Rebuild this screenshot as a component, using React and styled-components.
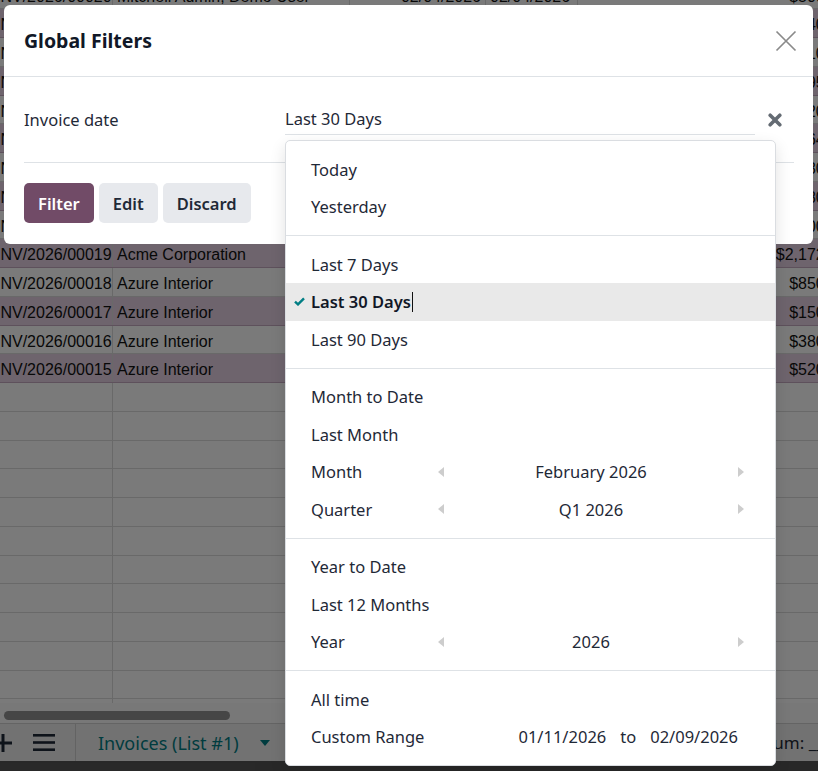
import React from 'react';
import styled, { createGlobalStyle } from 'styled-components';

const GlobalStyle = createGlobalStyle`
  html, body { margin: 0; padding: 0; }
  body { font-family: "Noto Sans", "Open Sans", sans-serif; overflow: hidden; }
  * { box-sizing: border-box; }
`;

const rows = [
  { num: 'INV/2026/00020', partner: 'Mitchell Admin, Demo User', date: '02/04/2026', due: '02/04/2026', amount: '$500.00' },
  { num: 'INV/2026/00027', partner: 'Deco Addict', date: '02/03/2026', due: '02/03/2026', amount: '$1,240.00', tint: true },
  { num: 'INV/2026/00026', partner: 'Gemini Furniture', date: '02/02/2026', due: '02/02/2026', amount: '$310.00' },
  { num: 'INV/2026/00025', partner: 'Lumber Inc', date: '02/01/2026', due: '02/01/2026', amount: '$95.00', tint: true },
  { num: 'INV/2026/00024', partner: 'Ready Mat', date: '01/30/2026', due: '01/30/2026', amount: '$720.00' },
  { num: 'INV/2026/00023', partner: 'The Jackson Group', date: '01/28/2026', due: '01/28/2026', amount: '$64.00', tint: true },
  { num: 'INV/2026/00022', partner: 'Wood Corner', date: '01/25/2026', due: '01/25/2026', amount: '$1,030.00' },
  { num: 'INV/2026/00021', partner: 'Deco Addict', date: '01/22/2026', due: '01/22/2026', amount: '$480.00', tint: true },
  { num: 'INV/2026/00020', partner: 'Mitchell Admin, Demo User', date: '01/20/2026', due: '01/20/2026', amount: '$500.00' },
  { num: 'INV/2026/00019', partner: 'Acme Corporation', date: '01/19/2026', due: '01/19/2026', amount: '$2,172.50', tint: true },
  { num: 'INV/2026/00018', partner: 'Azure Interior', date: '01/18/2026', due: '01/18/2026', amount: '$850.00' },
  { num: 'INV/2026/00017', partner: 'Azure Interior', date: '01/17/2026', due: '01/17/2026', amount: '$150.00', tint: true },
  { num: 'INV/2026/00016', partner: 'Azure Interior', date: '01/16/2026', due: '01/16/2026', amount: '$380.00' },
  { num: 'INV/2026/00015', partner: 'Azure Interior', date: '01/15/2026', due: '01/15/2026', amount: '$520.00', tint: true },
];

const emptyRows = Array.from({ length: 12 }, (_, i) => i);

const Page = styled.div`
  position: relative;
  width: 818px;
  height: 771px;
  overflow: hidden;
  background: #fff;
`;

const Sheet = styled.div`
  display: flex;
  flex-direction: column;
  height: 100%;
`;

const Grid = styled.div`
  flex: 1;
  margin: -19.5px 0 0 -8px;
  overflow: hidden;
  font-family: "Liberation Sans", Arial, sans-serif;
  font-size: 16px;
  color: #111;
`;

const Row = styled.div`
  display: grid;
  grid-template-columns: 121px 237px 136px 92px 274px;
  height: 28.75px;
  background: ${p => (p.$tint ? '#e6d1e4' : '#fff')};
  border-bottom: 1px solid ${p => (p.$tint ? '#c4aac1' : '#dcdcdc')};
`;

const Cell = styled.div`
  padding: 2px 4px 0;
  line-height: 27px;
  white-space: nowrap;
  overflow: hidden;
  border-right: 1px solid #dcdcdc;
  text-align: ${p => (p.$right ? 'right' : 'left')};
`;

const ScrollTrack = styled.div`
  height: 20px;
  padding: 8px 0 0 4px;
  background: #fafafa;
`;

const Thumb = styled.div`
  width: 226px;
  height: 9px;
  border-radius: 5px;
  background: #929292;
`;

const BottomBar = styled.div`
  display: flex;
  align-items: center;
  height: 38px;
  background: #efefef;
  border-top: 1px solid #d2d2d2;
  color: #1f2937;
`;

const BarIcon = styled.svg`
  flex: none;
  margin-left: ${p => p.$ml || 0}px;
`;

const BarDivider = styled.div`
  align-self: stretch;
  width: 1px;
  margin-left: 20px;
  background: #cfcfcf;
`;

const SheetTab = styled.div`
  display: flex;
  align-items: center;
  gap: 21px;
  padding-left: 22px;
  font-size: 18px;
  color: #017e84;
  white-space: nowrap;
`;

const Spacer = styled.div`
  flex: 1;
`;

const SumCell = styled.div`
  flex: none;
  width: 130px;
  margin-right: -76px;
  font-size: 17px;
  white-space: nowrap;
  color: #1f2937;
`;

const StatusStrip = styled.div`
  height: 10px;
  background: #555;
`;

const Backdrop = styled.div`
  position: absolute;
  inset: 0;
  background: rgba(0, 0, 0, 0.52);
`;

const Dialog = styled.section`
  position: absolute;
  top: 5px;
  left: 4px;
  width: 809px;
  background: #fff;
  border-radius: 6px;
  color: #1f2937;
`;

const Header = styled.header`
  display: flex;
  align-items: center;
  justify-content: space-between;
  height: 72px;
  padding: 0 16px 0 20px;
  border-bottom: 1px solid #dee2e6;
`;

const Title = styled.h4`
  margin: 0;
  font-size: 19.5px;
  font-weight: 700;
  color: #111827;
`;

const CloseButton = styled.button`
  display: flex;
  padding: 0;
  border: 0;
  background: none;
`;

const Body = styled.div`
  margin: 0 19px 0 20px;
  padding: 28px 0 27px;
  border-bottom: 1px solid #dee2e6;
`;

const FieldRow = styled.div`
  display: grid;
  grid-template-columns: 261px 470px auto;
  align-items: center;
  font-size: 16.5px;
`;

const Label = styled.div`
  padding-bottom: 2px;
  color: #1f2937;
`;

const Field = styled.div`
  position: relative;
  display: flex;
  align-items: center;
  height: 30px;
  padding-bottom: 2px;
  border-bottom: 1px solid #dee2e6;
`;

const ClearIcon = styled.svg`
  margin-left: 13px;
`;

const Footer = styled.footer`
  display: flex;
  gap: 5px;
  padding: 20px 20px 21px;
`;

const Button = styled.button`
  height: 40px;
  padding: 0 14px;
  border: 0;
  border-radius: 5px;
  font-family: inherit;
  font-size: 16.5px;
  font-weight: 600;
  background: ${p => (p.$primary ? '#714b67' : '#e7e9ed')};
  color: ${p => (p.$primary ? '#fff' : '#1f2937')};
`;

const Menu = styled.div`
  position: absolute;
  top: calc(100% + 6px);
  left: 0;
  z-index: 2;
  width: 491px;
  background: #fff;
  border: 1px solid #dadde1;
  border-radius: 5px;
  box-shadow: 0 6px 16px rgba(0, 0, 0, 0.12);
  font-size: 16.5px;
  color: #1f2937;
`;

const MenuGroup = styled.div`
  padding: 9.5px 0;
  & + & {
    border-top: 1px solid #dee2e6;
  }
`;

const MenuItem = styled.div`
  display: flex;
  align-items: center;
  height: 37.5px;
  padding-left: 8px;
  background: ${p => (p.$active ? '#e9e9e9' : 'transparent')};
  font-weight: ${p => (p.$active ? 600 : 400)};
  color: ${p => (p.$active ? '#111827' : '#1f2937')};
`;

const CheckSlot = styled.span`
  display: flex;
  align-items: center;
  flex: none;
  width: 17px;
`;

const TextCaret = styled.span`
  display: inline-block;
  width: 1px;
  height: 20px;
  margin-left: 1px;
  background: #111;
`;

const PeriodItem = styled(MenuItem)`
  display: grid;
  grid-template-columns: 17px 127px 6px 1fr 6px;
  padding-right: 31px;
`;

const PeriodValue = styled.span`
  text-align: center;
`;

const RangeItem = styled(MenuItem)`
  padding-right: 37px;
`;

const RangeDates = styled.div`
  display: flex;
  align-items: center;
  gap: 14px;
  margin-left: auto;
`;

const Caret = ({ dir }) => (
  <svg width="6" height="10" viewBox="0 0 6 10">
    <polygon points={dir === 'left' ? '6,0 0,5 6,10' : '0,0 6,5 0,10'} fill="#cdcdcd" />
  </svg>
);

const Check = () => (
  <svg width="11" height="9" viewBox="0 0 11 9">
    <polyline points="1,4.6 4,7.4 10,1.4" fill="none" stroke="#017e84" strokeWidth="2.4" />
  </svg>
);

function Period({ label, value }) {
  return (
    <PeriodItem>
      <span />
      <span>{label}</span>
      <Caret dir="left" />
      <PeriodValue>{value}</PeriodValue>
      <Caret dir="right" />
    </PeriodItem>
  );
}

function Option({ children, active }) {
  return (
    <MenuItem $active={active}>
      <CheckSlot>{active && <Check />}</CheckSlot>
      {children}
      {active && <TextCaret />}
    </MenuItem>
  );
}

function DateMenu() {
  return (
    <Menu>
      <MenuGroup>
        <Option>Today</Option>
        <Option>Yesterday</Option>
      </MenuGroup>
      <MenuGroup>
        <Option>Last 7 Days</Option>
        <Option active>Last 30 Days</Option>
        <Option>Last 90 Days</Option>
      </MenuGroup>
      <MenuGroup>
        <Option>Month to Date</Option>
        <Option>Last Month</Option>
        <Period label="Month" value="February 2026" />
        <Period label="Quarter" value="Q1 2026" />
      </MenuGroup>
      <MenuGroup>
        <Option>Year to Date</Option>
        <Option>Last 12 Months</Option>
        <Period label="Year" value="2026" />
      </MenuGroup>
      <MenuGroup>
        <Option>All time</Option>
        <RangeItem>
          <CheckSlot />
          Custom Range
          <RangeDates>
            <span>01/11/2026</span>
            <span>to</span>
            <span>02/09/2026</span>
          </RangeDates>
        </RangeItem>
      </MenuGroup>
    </Menu>
  );
}

export default function App() {
  return (
    <Page>
      <GlobalStyle />
      <Sheet>
        <Grid>
          {rows.map((r, i) => (
            <Row key={i} $tint={r.tint}>
              <Cell>{r.num}</Cell>
              <Cell>{r.partner}</Cell>
              <Cell $right>{r.date}</Cell>
              <Cell>{r.due}</Cell>
              <Cell $right>{r.amount}</Cell>
            </Row>
          ))}
          {emptyRows.map(i => (
            <Row key={'e' + i}>
              <Cell />
              <Cell />
              <Cell />
              <Cell />
              <Cell />
            </Row>
          ))}
        </Grid>
        <ScrollTrack>
          <Thumb />
        </ScrollTrack>
        <BottomBar>
          <BarIcon $ml={-6} width="18" height="18" viewBox="0 0 18 18">
            <rect x="7.5" y="0" width="3" height="18" fill="#1f2937" />
            <rect x="0" y="7.5" width="18" height="3" fill="#1f2937" />
          </BarIcon>
          <BarIcon $ml={21} width="22" height="17" viewBox="0 0 22 17">
            <rect x="0" y="0" width="22" height="2.6" fill="#1f2937" />
            <rect x="0" y="7.2" width="22" height="2.6" fill="#1f2937" />
            <rect x="0" y="14.4" width="22" height="2.6" fill="#1f2937" />
          </BarIcon>
          <BarDivider />
          <SheetTab>
            Invoices (List #1)
            <svg width="10" height="6" viewBox="0 0 10 6">
              <polygon points="0,0 10,0 5,6" fill="#017e84" />
            </svg>
          </SheetTab>
          <Spacer />
          <SumCell>Sum: ___</SumCell>
        </BottomBar>
        <StatusStrip />
      </Sheet>
      <Backdrop />
      <Dialog>
        <Header>
          <Title>Global Filters</Title>
          <CloseButton aria-label="Close">
            <svg width="22" height="22" viewBox="0 0 22 22">
              <path d="M1.5 1.5 L20.5 20.5 M20.5 1.5 L1.5 20.5" stroke="#8a8a8a" strokeWidth="1.7" />
            </svg>
          </CloseButton>
        </Header>
        <Body>
          <FieldRow>
            <Label>Invoice date</Label>
            <Field>
              Last 30 Days
              <DateMenu />
            </Field>
            <ClearIcon width="14" height="14" viewBox="0 0 14 14">
              <path d="M2.2 2.2 L11.8 11.8 M11.8 2.2 L2.2 11.8" stroke="#646b73" strokeWidth="3.6" strokeLinecap="round" />
            </ClearIcon>
          </FieldRow>
        </Body>
        <Footer>
          <Button $primary>Filter</Button>
          <Button>Edit</Button>
          <Button>Discard</Button>
        </Footer>
      </Dialog>
    </Page>
  );
}
